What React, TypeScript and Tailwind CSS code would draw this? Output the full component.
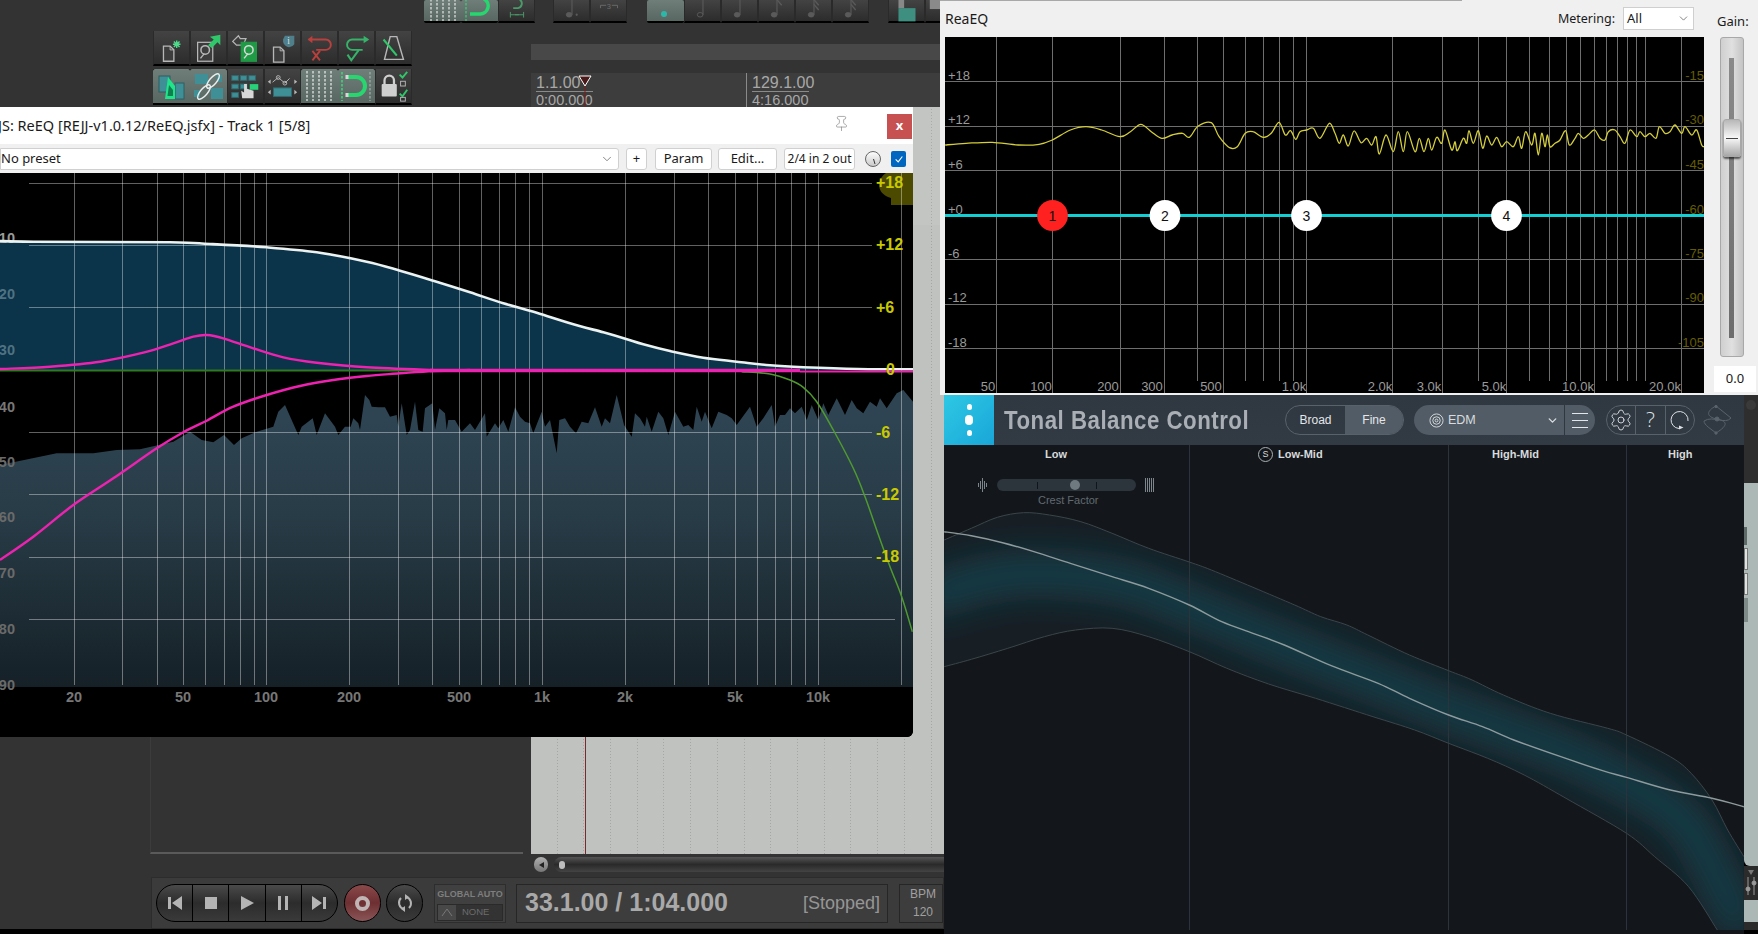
import React from "react";
import { ChevronDown, Pin, Settings } from "lucide-react";

type Pt = [number, number];
const pts = (a: Pt[], fx: (n: number) => number, fy: (n: number) => number): Pt[] =>
  a.map(([x, y]) => [fx(x), fy(y)] as Pt);
const poly = (a: Pt[]) => a.map(([x, y]) => `${x.toFixed(1)},${y.toFixed(1)}`).join(" ");
const smooth = (a: Pt[]) => {
  let d = `M${a[0][0].toFixed(1)} ${a[0][1].toFixed(1)}`;
  for (let i = 0; i < a.length - 1; i++) {
    const p0 = a[Math.max(0, i - 1)], p1 = a[i], p2 = a[i + 1], p3 = a[Math.min(a.length - 1, i + 2)];
    const c1 = [p1[0] + (p2[0] - p0[0]) / 6, p1[1] + (p2[1] - p0[1]) / 6];
    const c2 = [p2[0] - (p3[0] - p1[0]) / 6, p2[1] - (p3[1] - p1[1]) / 6];
    d += `C${c1[0].toFixed(1)} ${c1[1].toFixed(1)} ${c2[0].toFixed(1)} ${c2[1].toFixed(1)} ${p2[0].toFixed(1)} ${p2[1].toFixed(1)}`;
  }
  return d;
};

const xl = (n: number) => n / 3;
const xr = (n: number) => 470 + n / 3;
const yt = (n: number) => 170 + n / 3;
const yb = (n: number) => 400 + n / 3;

const white: Pt[] = [
  ...pts([[0, 213], [100, 215], [510, 217], [630, 222], [800, 232], [950, 247], [1100, 275], [1200, 302], [1300, 332]], xl, yt),
  ...pts([[0, 367], [100, 400], [200, 428], [300, 460], [400, 487], [466, 506], [520, 523], [600, 543], [700, 563], [800, 575], [900, 586], [1000, 592], [1165, 597], [1329, 598]], xr, yt),
];
const pinkBump: Pt[] = pts([[0, 597], [150, 590], [300, 575], [430, 548], [520, 520], [580, 500], [620, 495], [670, 505], [760, 535], [850, 562], [950, 578], [1100, 592], [1300, 600]], xl, yt);
const pinkLow: Pt[] = [
  ...pts([[0, 480], [100, 410], [220, 315], [340, 235], [470, 145], [550, 97]], xl, yb),
  ...pts([[620, 752], [700, 710], [800, 675], [900, 648], [1000, 630], [1100, 618], [1200, 610], [1300, 603], [1410, 600]], xl, yt),
];
const green: Pt[] = [
  ...pts([[815, 605], [900, 612], [960, 630], [1000, 652], [1040, 695]], xr, yt),
  ...pts([[1090, 90], [1150, 205], [1185, 290], [1220, 390], [1260, 500], [1295, 590], [1327, 695]], xr, yb),
];
const spectrum: Pt[] = [
  ...pts([[0, 885], [170, 850], [280, 850], [350, 840], [420, 838], [520, 815], [570, 785], [605, 810], [640, 817], [672, 795], [702, 825], [725, 805], [770, 785], [820, 770], [835, 725], [855, 705], [895, 795], [905, 770], [938, 745], [950, 795], [975, 730], [1005, 770], [1015, 795], [1035, 770], [1052, 770], [1060, 745], [1075, 760], [1080, 780], [1095, 675], [1108, 690], [1115, 710], [1135, 712], [1155, 712], [1170, 740], [1190, 735], [1195, 770], [1205, 700], [1220, 795], [1230, 780], [1245, 695], [1255, 780], [1268, 785], [1275, 715], [1297, 700], [1305, 780], [1318, 715], [1335, 730], [1340, 780], [1345, 750], [1365, 750], [1385, 785]], xl, yt),
  ...pts([[0, 760], [15, 780], [45, 730], [50, 800], [75, 760], [85, 775], [100, 750], [115, 785], [135, 712], [150, 740], [165, 755], [180, 760], [190, 790], [215, 725], [225, 770], [240, 750], [260, 850], [268, 750], [285, 745], [300, 770], [318, 790], [335, 755], [355, 760], [375, 712], [395, 770], [405, 745], [420, 760], [440, 675], [462, 765], [485, 800], [495, 730], [510, 745], [525, 770], [530, 740], [545, 785], [565, 725], [580, 745], [595, 795], [615, 725], [640, 770], [655, 765], [670, 780], [680, 710], [695, 755], [705, 725], [725, 775], [745, 725], [770, 735], [785, 745], [800, 765], [840, 710], [860, 770], [880, 745], [905, 705], [915, 770], [930, 735], [945, 735], [960, 715], [975, 730], [995, 710], [1010, 750], [1025, 705], [1045, 750], [1060, 700], [1075, 735], [1100, 685], [1125, 735], [1145, 690], [1160, 715], [1180, 730], [1200, 695], [1220, 710], [1230, 685], [1250, 715], [1280, 670], [1300, 660], [1329, 695]], xr, yt),
];

const jsV = [74, 122, 157, 183, 205, 224, 240, 254, 266, 349, 398, 432, 459, 481, 499, 515, 529, 542, 625, 674, 708, 735, 757, 775, 791, 805, 818, 901];
const jsH = [183, 245, 307, 432, 494, 557];
const leftLabels: [string, number, string][] = [
  ["10", 238, "#9a9a9a"], ["20", 294, "#4f7283"], ["30", 350, "#4f7283"], ["40", 407, "#777777"], ["50", 462, "#6a6a6a"],
  ["60", 517, "#6a6a6a"], ["70", 573, "#6a6a6a"], ["80", 629, "#6a6a6a"], ["90", 685, "#6a6a6a"],
];
const rightLabels: [string, number, number][] = [
  ["+18", 876, 182], ["+12", 876, 244], ["+6", 876, 307], ["0", 886, 369], ["-6", 876, 432], ["-12", 876, 494], ["-18", 876, 556],
];
const freqLabels: [string, number][] = [
  ["20", 74], ["50", 183], ["100", 266], ["200", 349], ["500", 459], ["1k", 542], ["2k", 625], ["5k", 735], ["10k", 818],
];

function JsGraph() {
  return (
    <svg viewBox="0 173 913 564" className="block w-[913px] h-[564px] bg-black">
      <defs>
        <linearGradient id="spec" gradientUnits="userSpaceOnUse" x1="0" y1="420" x2="0" y2="687">
          <stop offset="0" stopColor="#2e4452" />
          <stop offset="0.35" stopColor="#283c47" />
          <stop offset="1" stopColor="#152027" />
        </linearGradient>
      </defs>
      <polygon points={poly([...white, [913, 370], [0, 370]])} fill="#0b3349" />
      <polygon points={poly([...spectrum, [913, 687], [0, 687]])} fill="url(#spec)" />
      <path d="M886 173 C876 180 877 192 888 197 L891 198 L891 205 L913 205 L913 173 Z" fill="#4c4a00" />
      <g stroke="#ffffff" strokeOpacity="0.38" strokeWidth="1" shapeRendering="crispEdges">
        {jsV.map((x) => <line key={x} x1={x + 0.5} x2={x + 0.5} y1="173" y2="685" />)}
        {jsH.map((y) => <line key={y} x1="29" x2="872" y1={y + 0.5} y2={y + 0.5} />)}
        <line x1="29" x2="895" y1="619.5" y2="619.5" />
      </g>
      {leftLabels.map(([t, y, c]) => (
        <text key={t} x="15" y={y + 5} fill={c} fontSize="14.5" fontWeight="700" textAnchor="end" fontFamily="'Liberation Sans',sans-serif">{t}</text>
      ))}
      {freqLabels.map(([t, x]) => (
        <text key={t} x={x} y="702" fill="#777777" fontSize="14.5" fontWeight="700" textAnchor="middle" fontFamily="'Liberation Sans',sans-serif">{t}</text>
      ))}
      <line x1="0" x2="741" y1="370.5" y2="370.5" stroke="#2f7a20" strokeWidth="2" />
      <path d={smooth(green)} fill="none" stroke="#4f9a2f" strokeWidth="1.5" />
      <path d={smooth(white)} fill="none" stroke="#eaf2f2" strokeWidth="2.6" />
      <path d={smooth(pinkBump)} fill="none" stroke="#ee22b0" strokeWidth="2.4" />
      <path d={smooth(pinkLow)} fill="none" stroke="#ee22b0" strokeWidth="2.4" />
      <line x1="430" x2="800" y1="370.5" y2="370.5" stroke="#ee22b0" strokeWidth="3.4" />
      <line x1="800" x2="913" y1="371.5" y2="371.5" stroke="#ee22b0" strokeWidth="2" />
      {rightLabels.map(([t, x, y]) => (
        <text key={t} x={x} y={y + 6} fill="#c9c900" fontSize="16" fontWeight="700" fontFamily="'Liberation Sans',sans-serif">{t}</text>
      ))}
    </svg>
  );
}

function JsWindow() {
  return (
    <div className="absolute left-0 top-[107px] w-[913px] h-[630px] flex flex-col bg-black rounded-br-md overflow-hidden font-['Noto_Sans','Liberation_Sans',sans-serif] text-[#1a1a1a]">
      <div className="h-[37px] bg-white flex items-center">
        <span className="-ml-[2px] text-[14.5px] flex-1 whitespace-nowrap">JS: ReEQ [REJJ-v1.0.12/ReEQ.jsfx] - Track 1 [5/8]</span>
        <Pin size={17} strokeWidth={1} className="text-[#888] mr-[37px] mb-[4px]" />
        <div className="w-[25px] h-[25px] mr-px mt-[1px] bg-[#c75050] text-white text-[13px] font-bold flex items-center justify-center">x</div>
      </div>
      <div className="h-[29px] bg-[#f0f0f0] flex items-center text-[13px]">
        <div className="w-[619px] h-[22px] bg-white border border-[#d0d0d0] rounded-r-[3px] flex items-center justify-between pl-0 pr-1">
          <span>No preset</span>
          <ChevronDown size={14} strokeWidth={1.2} className="text-[#555]" />
        </div>
        <div className="ml-[7px] w-[21px] h-[22px] bg-white border border-[#d0d0d0] rounded-[3px] flex items-center justify-center">+</div>
        <div className="ml-[8px] w-[57px] h-[22px] bg-white border border-[#d0d0d0] rounded-[3px] flex items-center justify-center">Param</div>
        <div className="ml-[6px] w-[59px] h-[22px] bg-white border border-[#d0d0d0] rounded-[3px] flex items-center justify-center">Edit...</div>
        <div className="ml-[7px] w-[71px] h-[22px] bg-white border border-[#d0d0d0] rounded-[3px] flex items-center justify-center text-[12px] whitespace-nowrap">2/4 in 2 out</div>
        <svg viewBox="0 0 18 18" className="ml-[9px] w-[18px] h-[18px]">
          <defs>
            <linearGradient id="knob" x1="0" y1="0" x2="0" y2="1">
              <stop offset="0" stopColor="#ffffff" />
              <stop offset="1" stopColor="#c8c8c8" />
            </linearGradient>
          </defs>
          <circle cx="9" cy="9" r="7.5" fill="url(#knob)" stroke="#666" strokeWidth="1" />
          <line x1="9.5" y1="9" x2="11" y2="14" stroke="#333" strokeWidth="1" />
        </svg>
        <div className="ml-[9px] w-[15px] h-[16px] rounded-[2px] bg-[#0067c0] text-white flex items-center justify-center">
          <svg viewBox="0 0 12 12" className="w-[10px] h-[10px]"><path d="M2 6.5 L5 9.5 L10 3" fill="none" stroke="#fff" strokeWidth="1.3" /></svg>
        </div>
      </div>
      <JsGraph />
    </div>
  );
}

const eqV: [number, boolean][] = [[996, true], [1052, true], [1120, true], [1164, true], [1197, false], [1223, true], [1245, false], [1263, false], [1279, false], [1293, false], [1306, true], [1392, true], [1442, true], [1478, false], [1506, true], [1529, false], [1549, false], [1566, false], [1580, false], [1594, true], [1606, false], [1617, false], [1627, false], [1636, false], [1645, false], [1681, true]];
const eqH = [81, 126, 170, 215, 259, 304, 348];
const eqLeft: [string, number][] = [["+18", 75], ["+12", 119], ["+6", 164], ["+0", 209], ["-6", 253], ["-12", 297], ["-18", 342]];
const eqRight: [string, number][] = [["-15", 75], ["-30", 119], ["-45", 164], ["-60", 209], ["-75", 253], ["-90", 297], ["-105", 342]];
const eqBottom: [string, number][] = [["50", 988], ["100", 1041], ["200", 1108], ["300", 1152], ["500", 1211], ["1.0k", 1294], ["2.0k", 1380], ["3.0k", 1429], ["5.0k", 1494], ["10.0k", 1578], ["20.0k", 1665]];
const yellowA: Pt[] = pts([[10, 435], [50, 430], [100, 427], [150, 435], [190, 433], [215, 420], [250, 390], [280, 380], [310, 390], [345, 410], [365, 395], [385, 373], [405, 395], [425, 415], [445, 405], [465, 400], [478, 412], [495, 378], [520, 368], [535, 410], [555, 443], [570, 440], [585, 400], [600, 395], [620, 412], [635, 400], [650, 367], [662, 405], [672, 392], [682, 418]], (n) => 940 + n / 1.917, (n) => n / 3);
const yellowB: Pt[] = pts([[0, 305], [20, 300], [40, 295], [60, 325], [88, 280], [105, 310], [118, 340], [130, 315], [145, 348], [162, 303], [183, 338], [200, 325], [215, 345], [228, 320], [238, 372], [258, 315], [280, 365], [295, 305], [310, 365], [322, 305], [345, 365], [358, 325], [372, 365], [385, 325], [395, 360], [410, 322], [425, 340], [435, 300], [455, 360], [465, 335], [472, 362], [490, 325], [500, 340], [507, 302], [520, 340], [535, 302], [548, 355], [560, 318], [575, 345], [590, 322], [605, 350], [620, 335], [640, 350], [655, 320], [665, 355], [677, 305], [695, 345], [705, 310], [715, 375], [725, 310], [735, 350], [742, 315], [750, 350], [765, 340], [780, 330], [797, 302], [808, 345], [825, 325], [835, 310], [850, 325], [865, 315], [884, 300], [900, 325], [915, 330], [925, 305], [945, 300], [960, 320], [975, 340], [990, 300], [1010, 320], [1020, 305], [1035, 320], [1050, 310], [1068, 325], [1078, 290], [1095, 310], [1110, 305], [1125, 285], [1145, 310], [1155, 290], [1175, 315], [1190, 300], [1205, 345], [1212, 350]], (n) => 1300 + n / 3, (n) => 30 + n / 3);

function EqGraph() {
  const f = "'Liberation Sans',sans-serif";
  return (
    <svg viewBox="945 37 759 356" className="block w-[759px] h-[356px] bg-black">
      <g stroke="#6e6e6e" strokeWidth="1" shapeRendering="crispEdges">
        {eqV.map(([x, full]) => <line key={x} x1={x + 0.5} x2={x + 0.5} y1="37" y2={full ? 393 : 381} />)}
        {eqH.map((y) => <line key={y} x1="945" x2="1704" y1={y + 0.5} y2={y + 0.5} />)}
      </g>
      {eqLeft.map(([t, y]) => <text key={t} x="948" y={y + 5} fill="#9a9a9a" fontSize="13" fontFamily={f}>{t}</text>)}
      {eqRight.map(([t, y]) => <text key={t} x="1704" y={y + 5} fill="#655c00" fontSize="13" textAnchor="end" fontFamily={f}>{t}</text>)}
      {eqBottom.map(([t, x]) => <text key={t} x={x} y="391" fill="#9a9a9a" fontSize="13" textAnchor="middle" fontFamily={f}>{t}</text>)}
      <path d={smooth([...yellowA, ...yellowB])} fill="none" stroke="#d4ce3a" strokeWidth="1.3" />
      <line x1="945" x2="1704" y1="215.5" y2="215.5" stroke="#12cfd3" strokeWidth="3" />
      {[["1", 1052.5, "#ff2020"], ["2", 1165, "#ffffff"], ["3", 1306.5, "#ffffff"], ["4", 1506.5, "#ffffff"]].map(([t, x, c]) => (
        <g key={t as string}>
          <circle cx={x as number} cy="215.5" r="15.4" fill={c as string} />
          <text x={x as number} y="220.5" fontSize="14" textAnchor="middle" fill="#111" fontFamily={f}>{t}</text>
        </g>
      ))}
    </svg>
  );
}

function EqWindow() {
  return (
    <div className="absolute left-[940px] top-0 w-[818px] h-[395px] bg-[#f0f0f0] font-['Noto_Sans','Liberation_Sans',sans-serif] text-[13px] text-[#1a1a1a] flex flex-col">
      <div className="h-px w-[522px] bg-[#a8a8a8]" />
      <div className="h-[36px] flex items-start">
        <span className="ml-[5px] mt-[9px] flex-1 leading-[18px] text-[14px]">ReaEQ</span>
        <span className="mt-[9px] leading-[18px] text-[12.5px]">Metering:</span>
        <div className="ml-[8px] mt-[6px] w-[71px] h-[23px] bg-white border border-[#cfcfcf] flex items-center justify-between pl-[3px] pr-[3px]">
          <span>All</span>
          <ChevronDown size={13} strokeWidth={1.2} className="text-[#444]" />
        </div>
        <span className="ml-[23px] mr-[10px] w-[31px] mt-[11px] leading-[18px] whitespace-nowrap">Gain:</span>
      </div>
      <div className="flex flex-1 pl-[5px]">
        <EqGraph />
        <div className="ml-[8px] w-[46px] flex flex-col items-center">
          <div className="relative w-[24px] h-[320px] ml-[-7px] rounded-[3px] border border-[#a8a8a8] bg-gradient-to-r from-[#cfcfcf] via-[#e0e0e0] to-[#c4c4c4] flex justify-center">
            <div className="w-[5px] h-[280px] mt-[20px] bg-gradient-to-b from-[#8a8a8a] to-[#6c6c6c]" />
            <div className="absolute left-[2px] top-[81px] w-[18px] h-[38px] rounded-[3px] border border-[#a8a8a8] bg-gradient-to-b from-[#b8b8b8] via-[#f8f8f8] to-[#a8a8a8] shadow-[0_2px_2px_rgba(0,0,0,0.6)] flex items-center">
              <div className="w-full h-px bg-[#444] mx-[2px]" />
            </div>
          </div>
          <div className="mt-[9px] w-[42px] h-[26px] bg-white flex items-center justify-center">0.0</div>
        </div>
      </div>
    </div>
  );
}

const tx = (n: number) => 940 + n / 1.917;
const ty = (n: number) => 500 + n / 3;
const upper: Pt[] = pts([[8, 120], [60, 85], [110, 52], [160, 38], [210, 45], [270, 65], [330, 100], [400, 145], [478, 186], [520, 210], [600, 262], [680, 315], [730, 350], [780, 375], [820, 405], [900, 465], [975, 512], [1020, 540], [1080, 585], [1170, 640], [1280, 685], [1316, 705], [1400, 770], [1440, 820], [1480, 900], [1510, 990], [1541, 1070]], tx, ty);
const lower: Pt[] = pts([[8, 500], [60, 478], [130, 445], [200, 410], [260, 390], [330, 385], [400, 410], [478, 455], [550, 505], [630, 552], [720, 595], [830, 650], [910, 690], [975, 730], [1050, 775], [1120, 825], [1200, 895], [1316, 1000], [1370, 1070], [1435, 1160], [1490, 1290]], tx, ty);
const mid: Pt[] = pts([[8, 95], [60, 107], [120, 128], [180, 155], [250, 190], [330, 230], [400, 265], [478, 315], [540, 365], [600, 400], [660, 435], [750, 497], [840, 550], [900, 595], [975, 645], [1040, 680], [1100, 720], [1190, 770], [1270, 812], [1316, 832], [1400, 870], [1480, 895], [1541, 920]], tx, ty);
const core: Pt[] = pts([[-40, 300], [130, 225], [330, 240], [478, 320], [650, 430], [830, 540], [975, 630], [1200, 760], [1316, 850], [1420, 950], [1480, 1100], [1541, 1300]], tx, ty);

function TbcGraph() {
  const bandD = smooth(upper) + "L" + `${tx(1541)} ${ty(1290)}` + "L" + smooth([...lower].reverse()).slice(1) + "Z";
  return (
    <svg viewBox="944 445 800 485" className="absolute left-0 top-[50px] w-[800px] h-[485px]">
      <defs>
        <clipPath id="band"><path d={bandD} /></clipPath>
        <filter id="glow" x="-30%" y="-30%" width="160%" height="160%"><feGaussianBlur stdDeviation="18" /></filter>
      </defs>
      <path d={bandD} fill="#171f25" />
      <g clipPath="url(#band)">
        <path d={smooth(core)} fill="none" stroke="#124753" strokeWidth="30" filter="url(#glow)" />
      </g>
      <g stroke="#2b343a" strokeWidth="1" shapeRendering="crispEdges">
        {[1189, 1448, 1626].map((x) => <line key={x} x1={x + 0.5} x2={x + 0.5} y1="445" y2="930" />)}
      </g>
      <path d={smooth(upper)} fill="none" stroke="#3a454a" strokeWidth="1" />
      <path d={smooth(lower)} fill="none" stroke="#3a454a" strokeWidth="1" />
      <path d={smooth(mid)} fill="none" stroke="#8e9a9d" strokeWidth="1.4" />
    </svg>
  );
}

function TbcWindow() {
  return (
    <div className="absolute left-[944px] top-[395px] w-[800px] h-[539px] flex flex-col bg-[#13171b] font-['Liberation_Sans',sans-serif]">
      <TbcGraph />
      <div className="relative h-[50px] bg-gradient-to-b from-[#2f3741] to-[#323a44] flex items-center">
        <div className="w-[50px] h-[50px] bg-gradient-to-br from-[#2ec8e4] to-[#19a6d8] flex flex-col items-center justify-center gap-[5px]">
          <div className="w-[5px] h-[6px] rounded-full bg-white" />
          <div className="w-[8px] h-[10px] rounded-full bg-white" />
          <div className="w-[5px] h-[6px] rounded-full bg-white" />
        </div>
        <div className="ml-[10px] w-[281px] pt-[2px]">
          <span className="inline-block origin-left scale-x-[0.84] text-[26.5px] font-bold text-[#a9afb5] whitespace-nowrap tracking-[0.6px]">Tonal Balance Control</span>
        </div>
        <div className="w-[119px] h-[30px] rounded-full border border-[#58626b] flex overflow-hidden text-[12px] text-[#e4e6e8]">
          <div className="w-[59px] flex items-center justify-center">Broad</div>
          <div className="flex-1 bg-[#515c66] flex items-center justify-center">Fine</div>
        </div>
        <div className="ml-[10px] w-[181px] h-[30px] rounded-full bg-[#515c66] flex items-center text-[12.5px] text-[#d9dcdf]">
          <svg viewBox="0 0 16 16" className="ml-[15px] w-[15px] h-[15px]" fill="none" stroke="#d9dcdf" strokeWidth="1">
            <circle cx="8" cy="8" r="7" /><circle cx="8" cy="8" r="4" /><circle cx="8" cy="8" r="1.5" />
          </svg>
          <span className="ml-[4px] flex-1">EDM</span>
          <ChevronDown size={13} strokeWidth={2.6} className="mr-[5px] text-[#d9dcdf]" />
          <div className="w-px h-[30px] bg-[#2f3741]" />
          <div className="w-[30px] flex flex-col items-center gap-[6px]">
            <div className="w-[16px] h-px bg-[#e4e6e8]" /><div className="w-[16px] h-px bg-[#e4e6e8]" /><div className="w-[16px] h-px bg-[#e4e6e8]" />
          </div>
        </div>
        <div className="ml-[11px] w-[89px] h-[30px] rounded-full border border-[#58626b] flex text-[#dfe2e4]">
          <div className="w-[29px] flex items-center justify-center border-r border-[#58626b]"><Settings size={24} strokeWidth={0.9} /></div>
          <div className="w-[30px] flex items-center justify-center border-r border-[#58626b] text-[21px] font-light font-['Open_Sans','Liberation_Sans',sans-serif]">?</div>
          <div className="flex-1 flex items-center justify-center">
            <svg viewBox="0 0 20 20" className="w-[20px] h-[20px]" fill="none" stroke="#dfe2e4" strokeWidth="1">
              <path d="M9 18.5 A8.5 8.5 0 1 1 18 11" />
              <path d="M9 15.5 L13.5 17.5 L9 19.5 Z" fill="#dfe2e4" stroke="none" />
            </svg>
          </div>
        </div>
        <svg viewBox="0 0 30 30" className="ml-[8px] w-[30px] h-[30px]" fill="none" stroke="#59636c" strokeWidth="1">
          <path d="M13 1 L28 13 C22 20 10 10 1 16 C1 20 8 24 13 28 M13 1 C3 6 3 12 14 14 C24 16 26 20 13 28" />
          <circle cx="14" cy="14" r="2" fill="#59636c" />
          <circle cx="13" cy="1.5" r="1.2" fill="#59636c" />
          <circle cx="13" cy="28" r="1.2" fill="#59636c" />
        </svg>
      </div>
      <div className="relative h-[19px] text-[11px] font-bold text-[#d8dadc] flex items-center">
        <span className="w-[224px] text-center">Low</span>
        <span className="absolute left-[314px] flex items-center gap-[5px]">
          <span className="w-[15px] h-[15px] rounded-full border border-[#aab0b4] text-[9px] flex items-center justify-center font-normal">S</span>
          Low-Mid
        </span>
        <span className="absolute left-[548px]">High-Mid</span>
        <span className="absolute left-[724px]">High</span>
      </div>
      <div className="relative ml-[34px] mt-[14px] flex items-center">
        <svg viewBox="0 0 10 14" className="w-[10px] h-[14px]" stroke="#7d868c" strokeWidth="1" shapeRendering="crispEdges">
          <path d="M0.5 5v4M2.5 3v8M4.5 0v14M6.5 3v8M8.5 5v4" />
        </svg>
        <div className="relative ml-[9px] w-[139px] h-[12px] rounded-full bg-[#2c343c]">
          <div className="absolute left-[40px] top-[3px] w-px h-[7px] bg-[#11151a]" />
          <div className="absolute left-[99px] top-[3px] w-px h-[7px] bg-[#11151a]" />
          <div className="absolute left-[73px] top-[1px] w-[10px] h-[10px] rounded-full bg-[#6f7980]" />
        </div>
        <svg viewBox="0 0 10 14" className="ml-[9px] w-[10px] h-[14px]" stroke="#7d868c" strokeWidth="1" shapeRendering="crispEdges">
          <path d="M0.5 0v14M2.5 0v14M4.5 0v14M6.5 0v14M8.5 0v14" />
        </svg>
      </div>
      <span className="relative ml-[94px] text-[11px] text-[#626a70]">Crest Factor</span>
    </div>
  );
}

function RightStrip() {
  return (
    <div className="absolute left-[1744px] top-[395px] w-[14px] h-[539px] flex flex-col bg-black">
      <div className="h-[88px] bg-[#2e2e2e] flex justify-center">
        <div className="mt-[5px] w-[10px] h-[10px] rounded-full bg-[#3a3a3a]" />
      </div>
      <div className="h-[383px] bg-[#abb8b5] rounded-bl-[6px] flex flex-col gap-[3px] pt-[44px]">
        <div className="w-[3px] h-[18px] bg-[#5e6a68]" />
        <div className="w-[4px] h-[22px] bg-[#dde3e1] border border-[#777]" />
        <div className="w-[4px] h-[22px] bg-[#dde3e1] border border-[#777]" />
        <div className="w-[4px] h-[24px] bg-[#7d8a88]" />
      </div>
      <div className="h-[34px] bg-[#2b2b2b] flex flex-col items-center pt-[3px] text-[#9a9a9a]">
        <svg viewBox="0 0 14 30" className="w-[14px] h-[30px]" stroke="#9a9a9a" fill="none">
          <path d="M4 1 L7 6 L10 1 Z" fill="#777" stroke="none" />
          <path d="M4 8v18M10 8v18" /><circle cx="4" cy="20" r="2" fill="#9a9a9a" /><circle cx="10" cy="14" r="2" fill="#9a9a9a" />
        </svg>
      </div>
      <div className="h-[22px] bg-[#abb8b5]" />
      <div className="h-[8px] bg-[#2b2b2b]" />
    </div>
  );
}

/* ----- Reaper toolbar ----- */
function Tb({ active, children, w = "w-[37px]" }: { active?: boolean; children?: React.ReactNode; w?: string }) {
  return (
    <div className={`${w} h-full border-b-2 border-b-black flex items-center justify-center ${active ? "bg-gradient-to-b from-[#6f7e79] to-[#596763] rounded-[2px]" : "bg-gradient-to-b from-[#434343] to-[#2c2c2c] border-x border-x-[#2a2a2a]"}`}>
      {children}
    </div>
  );
}
const Ic = ({ children }: { children: React.ReactNode }) => (
  <svg viewBox="0 0 37 34" className="w-[37px] h-[34px]" fill="none">{children}</svg>
);
const Doc = ({ x = 0, y = 0 }: { x?: number; y?: number }) => (
  <g transform={`translate(${x} ${y})`}>
    <path d="M10 13 H17 L21 17 V29 H10 Z" fill="#3d3d3d" stroke="#b7b7b7" strokeWidth="1.4" />
    <path d="M17 13 V17 H21" stroke="#b7b7b7" strokeWidth="1" />
  </g>
);
const Hdd = ({ x, y, c }: { x: number; y: number; c: string }) => (
  <g transform={`translate(${x} ${y})`}>
    <rect x="0" y="0" width="16" height="20" fill={c === "#b7b7b7" ? "#3c3c3c" : "#1f9a45"} stroke={c} strokeWidth="1.3" />
    <circle cx="8" cy="8" r="4.5" stroke={c === "#b7b7b7" ? c : "#d8d8d8"} strokeWidth="1.6" />
    <path d="M3 17 L7 12" stroke={c === "#b7b7b7" ? c : "#d8d8d8"} strokeWidth="1.5" />
  </g>
);

const row1 = [
  <Ic key="a"><Doc x={0} y={2} /><path d="M24 9 L24 17 M20 13 L28 13 M21 10 L27 16 M27 10 L21 16" stroke="#4fd98a" strokeWidth="1.5" /></Ic>,
  <Ic key="b"><Hdd x={7} y={11} c="#b7b7b7" /><path d="M18 14 L24 8 L20 5 L31 3 L31 14 L28 11 L22 17 Z" fill="#2fc76a" /></Ic>,
  <Ic key="c"><path d="M5 10 L11 4 L13 7 L19 7 L16 14 L9 14 Z" fill="#3d3d3d" stroke="#b7b7b7" strokeWidth="1.3" /><Hdd x={14} y={11} c="#1f9a45" /></Ic>,
  <Ic key="d"><Doc x={-1} y={3} /><path d="M21 4 H31 V13 A7 7 0 0 1 24 16 A8 8 0 0 1 19 8 Z" fill="#4e7f8a" /><text x="25" y="13" fontSize="10" fontFamily="'Liberation Serif',serif" fill="#cfe1e4" textAnchor="middle">i</text></Ic>,
  <Ic key="e"><path d="M7 8 H25 A5 5 0 0 1 25 19 H15" stroke="#b8403d" strokeWidth="2" /><path d="M11 4 L6 8 L11 12 Z" fill="#b8403d" /><path d="M11 20 L19 30 M19 20 L11 30" stroke="#b8403d" strokeWidth="2" /></Ic>,
  <Ic key="f"><path d="M30 8 H14 A5 5 0 0 0 14 19 H25" stroke="#36b26a" strokeWidth="2" /><path d="M26 4 L32 8 L26 12 Z" fill="#36b26a" /><path d="M9 24 L13 30 L21 19" stroke="#36b26a" strokeWidth="2.2" /></Ic>,
  <Ic key="g"><path d="M15 5 H22 L29 29 H9 Z" stroke="#b7b7b7" strokeWidth="1.5" /><path d="M8 8 L22 25" stroke="#2fc76a" strokeWidth="2.2" /></Ic>,
];
const row2 = [
  <Ic key="a"><rect x="6" y="7" width="11" height="16" fill="#3f8f96" stroke="#2c5f62" /><rect x="22" y="14" width="9" height="16" fill="#3f8f96" stroke="#2c5f62" /><path d="M15 8 L22 17 V30 H12 Z" fill="#1fe58a" /><path d="M16 16 L20 21 V27 H14.5 Z" fill="#0f7f50" /></Ic>,
  <Ic key="b"><rect x="5" y="5" width="13" height="10" fill="#3f8f96" /><rect x="21" y="19" width="12" height="11" fill="#3f8f96" /><rect x="4" y="21" width="6" height="7" fill="#3f8f96" /><rect x="27" y="6" width="5" height="7" fill="#3f8f96" /><g stroke="#e9efee" strokeWidth="1.4" fill="none"><ellipse cx="23" cy="12" rx="9" ry="3.5" transform="rotate(-50 23 12)" /><ellipse cx="14" cy="23" rx="9" ry="3.5" transform="rotate(-50 14 23)" /></g></Ic>,
  <Ic key="c">
    {[[4, 6], [13, 6], [22, 6], [4, 15], [13, 15], [4, 24]].map(([x, y], i) => <rect key={i} x={x} y={y} width="7" height="5" fill="#3f8f96" stroke="#2f6a70" />)}
    <rect x="23" y="15" width="9" height="6" fill="#28d07a" />
    <path d="M17 15 V24 L14 22 L15 30 H27 V22 L20 20 V15 Z" fill="#d8d8d8" />
  </Ic>,
  <Ic key="d"><path d="M8 13 L14 8 L21 14 L26 9" stroke="#b7b7b7" strokeWidth="1" /><circle cx="14" cy="8" r="2" stroke="#b7b7b7" /><circle cx="21" cy="14" r="2" stroke="#b7b7b7" /><path d="M6 10 V15 L3 12.5 Z M31 10 V15 L34 12.5 Z M6 21 V26 L3 23.5 Z M31 21 V26 L34 23.5 Z" fill="#b7b7b7" /><rect x="9" y="19" width="19" height="9" fill="#3f8f96" stroke="#2f6a70" /></Ic>,
  <Ic key="e">{[6, 12, 18, 24, 30].map((x) => <line key={x} x1={x} x2={x} y1="2" y2="32" stroke="#dfe6e3" strokeWidth="1.3" strokeDasharray="2.5 1.5" />)}</Ic>,
  <Ic key="f"><line x1="4" x2="4" y1="3" y2="32" stroke="#38e07a" strokeWidth="1.4" strokeDasharray="2.5 1.5" /><line x1="32" x2="32" y1="3" y2="32" stroke="#9fb0aa" strokeWidth="1.2" strokeDasharray="2.5 1.5" /><path d="M9 8 H18 A9 9 0 0 1 18 26 H9" stroke="#27d66f" strokeWidth="4" /><path d="M9 6 V10 M9 24 V28" stroke="#d8d8d8" strokeWidth="3" /></Ic>,
  <Ic key="g"><rect x="6" y="15" width="16" height="13" fill="#cfcfcf" rx="1" /><path d="M9 15 V11 A5 5 0 0 1 19 11 V15" stroke="#cfcfcf" strokeWidth="2.4" /><path d="M25 5 L28 8 L33 2 M25 25 L28 28 L33 21" stroke="#2fc76a" strokeWidth="2" /><rect x="26" y="12" width="5" height="5" stroke="#b7b7b7" /><rect x="26" y="29" width="5" height="4" stroke="#b7b7b7" /></Ic>,
];

function Note({ flags = 0, hollow = false, dot = false }: { flags?: number; hollow?: boolean; dot?: boolean }) {
  return (
    <svg viewBox="0 0 37 23" className="w-[37px] h-[23px]" fill="none">
      <ellipse cx="16" cy="16" rx="3" ry="2.4" fill={hollow ? "none" : "#5a5a5a"} stroke="#5a5a5a" />
      <line x1="19" x2="19" y1="0" y2="16" stroke="#5a5a5a" strokeWidth="1.2" />
      {Array.from({ length: flags }).map((_, i) => <path key={i} d={`M19 ${i * 5} L24 ${i * 5 + 6}`} stroke="#5a5a5a" strokeWidth="1.4" />)}
      {dot && <circle cx="24" cy="16" r="1.2" fill="#5a5a5a" />}
    </svg>
  );
}

function TransportIcon({ children }: { children: React.ReactNode }) {
  return (
    <div className="flex-1 h-full flex items-center justify-center border-r border-r-black last:border-r-0">
      <svg viewBox="0 0 20 20" className="w-[20px] h-[20px]">{children}</svg>
    </div>
  );
}

function Reaper() {
  return (
    <div className="w-[944px] h-[934px] flex flex-col font-['Liberation_Sans',sans-serif] bg-[#333333] text-[#a8a8a8]">
      <div className="h-[23px] flex pl-[424px] overflow-hidden">
        <div className="flex h-full">
          <Tb active>
            <svg viewBox="0 0 37 23" className="w-[37px] h-[23px]">{[7, 13, 19, 25, 31].map((x) => <line key={x} x1={x} x2={x} y1="0" y2="22" stroke="#dfe6e3" strokeWidth="1.2" strokeDasharray="2.5 1.5" />)}</svg>
          </Tb>
          <Tb active>
            <svg viewBox="0 0 37 23" className="w-[37px] h-[23px]" fill="none"><path d="M9 15 H19 A8 8 0 0 0 23 0" stroke="#27d66f" strokeWidth="3.5" /><line x1="5" x2="5" y1="0" y2="22" stroke="#38e07a" strokeDasharray="2.5 1.5" /></svg>
          </Tb>
          <Tb>
            <svg viewBox="0 0 37 23" className="w-[37px] h-[23px]" fill="none"><path d="M15 9 H20 A5 5 0 0 0 22 0" stroke="#4a9a6a" strokeWidth="2" /><path d="M12 16 H26 M12 13 V19 M26 13 V19 M17 16 h4" stroke="#4a9a6a" strokeWidth="1" /></svg>
          </Tb>
        </div>
        <div className="ml-[18px] flex h-full">
          <Tb><Note dot /></Tb>
          <Tb>
            <svg viewBox="0 0 37 23" className="w-[37px] h-[23px]" fill="none"><path d="M10 9 V6 H16 M22 6 H28 V9" stroke="#6b6b6b" /><text x="19" y="10" fontSize="8" fill="#6b6b6b" textAnchor="middle">3</text></svg>
          </Tb>
        </div>
        <div className="ml-[20px] flex h-full">
          <Tb active><svg viewBox="0 0 37 23" className="w-[37px] h-[23px]"><circle cx="17" cy="15" r="3" fill="#2cb8a8" /></svg></Tb>
          <Tb><Note hollow /></Tb>
          <Tb><Note /></Tb>
          <Tb><Note flags={1} /></Tb>
          <Tb><Note flags={2} /></Tb>
          <Tb><Note flags={2} /></Tb>
        </div>
        <div className="ml-[19px] flex h-full">
          <Tb>
            <svg viewBox="0 0 37 23" className="w-[37px] h-[23px]"><rect x="10" y="9" width="18" height="14" fill="#3f8f80" /><rect x="10" y="0" width="6" height="9" fill="#888" /></svg>
          </Tb>
          <Tb>
            <svg viewBox="0 0 37 23" className="w-[37px] h-[23px]" fill="none"><rect x="4" y="-4" width="18" height="14" fill="#8a8a8a" /></svg>
          </Tb>
        </div>
      </div>

      <div className="h-[84px] flex">
        <div className="w-[531px] pl-[153px] pt-[8px] flex flex-col gap-[3px]">
          <div className="flex h-[35px] w-[259px]">{row1.map((c, i) => <Tb key={i}>{c}</Tb>)}</div>
          <div className="flex h-[36px] w-[259px] bg-black">{row2.map((c, i) => <Tb key={i} active={[0, 1, 4, 5].includes(i)}>{c}</Tb>)}</div>
        </div>
        <div className="flex-1 flex flex-col">
          <div className="mt-[21px] h-[16px] bg-[#484848]" />
          <div className="relative mt-[13px] h-[34px] bg-[#3d3d3d] flex text-[#a8a8a8]">
            <div className="w-[215px] pl-[5px] pt-[1px]">
              <div className="text-[16px] leading-[17px]">1.1.00</div>
              <div className="w-[57px] h-px bg-[#8a8a8a]" />
              <div className="text-[14.5px] leading-[16px]">0:00.000</div>
            </div>
            <div className="border-l border-l-[#8a8a8a] pl-[5px] pt-[1px]">
              <div className="text-[16px] leading-[17px]">129.1.00</div>
              <div className="w-[57px] h-px bg-[#8a8a8a]" />
              <div className="text-[14.5px] leading-[16px]">4:16.000</div>
            </div>
            <svg viewBox="0 0 14 34" className="absolute left-[47px] top-0 w-[14px] h-[34px]">
              <path d="M1 3 H13 L7 13 Z" fill="#4a1a1a" stroke="#ffffff" strokeWidth="1" />
              <line x1="7" x2="7" y1="13" y2="34" stroke="#7a1f1f" />
            </svg>
          </div>
        </div>
      </div>

      <div className="h-[747px] flex">
        <div className="ml-[150px] w-[373px] border-l border-l-[#3c3c3c] border-b-2 border-b-[#5a5a5a]" />
        <div className="relative ml-[8px] flex-1 bg-[repeating-linear-gradient(180deg,#c0c2c0_0,#c0c2c0_2px,transparent_2px,transparent_3px),repeating-linear-gradient(90deg,transparent_0,transparent_25.7px,#a4a6a4_25.7px,#a4a6a4_26.7px)] bg-[#c0c2c0]">
          <div className="absolute inset-x-0 top-0 h-[118px] bg-white/5" />
          <div className="absolute left-[54px] top-0 w-px h-full bg-[#7a2a2a]" />
        </div>
      </div>

      <div className="h-[23px] flex">
        <div className="ml-[534px] mt-[3px] w-[14px] h-[15px] rounded-full bg-gradient-to-b from-[#b0b0b0] to-[#777] flex items-center justify-center">
          <div className="w-0 h-0 border-y-[3px] border-y-transparent border-r-[5px] border-r-[#222]" />
        </div>
        <div className="ml-[6px] mt-[3px] flex-1 h-[15px] rounded-l-full bg-gradient-to-b from-[#555] via-[#2a2a2a] to-[#444] flex items-center pl-[5px]">
          <div className="w-[6px] h-[8px] rounded-full bg-[#bdbdbd]" />
        </div>
      </div>

      <div className="h-[52px] ml-[151px] bg-[#3b3b3b] border border-[#2c2c2c] flex items-center pl-[4px] gap-[6px]">
        <div className="w-[182px] h-[38px] rounded-full bg-gradient-to-b from-[#4a4a4a] via-[#2c2c2c] to-[#3a3a3a] border border-black flex overflow-hidden">
          <TransportIcon><path d="M3 4 H6 V16 H3 Z M17 3 V17 L7 10 Z" fill="#b4b4b4" /></TransportIcon>
          <TransportIcon><rect x="4" y="4" width="12" height="12" fill="#b4b4b4" /></TransportIcon>
          <TransportIcon><path d="M4 3 L17 10 L4 17 Z" fill="#b4b4b4" /></TransportIcon>
          <TransportIcon><path d="M5 3 H8 V17 H5 Z M12 3 H15 V17 H12 Z" fill="#b4b4b4" /></TransportIcon>
          <TransportIcon><path d="M3 3 L13 10 L3 17 Z M14 4 H17 V16 H14 Z" fill="#b4b4b4" /></TransportIcon>
        </div>
        <div className="w-[37px] h-[38px] rounded-full bg-gradient-to-b from-[#8a4a4c] via-[#6e2f32] to-[#8a5658] border border-black flex items-center justify-center">
          <div className="w-[15px] h-[15px] rounded-full border-[4px] border-[#c0b4b4]" />
        </div>
        <div className="ml-[-1px] w-[37px] h-[38px] rounded-full bg-gradient-to-b from-[#4a4a4a] via-[#2c2c2c] to-[#3a3a3a] border border-black flex items-center justify-center">
          <svg viewBox="0 0 20 20" className="w-[20px] h-[20px]" fill="none" stroke="#b4b4b4" strokeWidth="2">
            <path d="M6 5 A6.5 6.5 0 0 0 9 16" /><path d="M14 15 A6.5 6.5 0 0 0 11 4" />
            <path d="M10 1 V7 L14 4 Z M10 13 V19 L6 16 Z" fill="#b4b4b4" stroke="none" />
          </svg>
        </div>
        <div className="ml-[5px] w-[72px] h-[39px] bg-[#404040] border border-[#2d2d2d] flex flex-col items-center pt-[2px]">
          <span className="text-[9px] font-bold text-[#7e7e7e] leading-[14px] whitespace-nowrap">GLOBAL AUTO</span>
          <div className="mt-[3px] w-[66px] h-[17px] bg-[#333] border border-[#2a2a2a] flex items-center text-[9.5px] text-[#6c6c6c]">
            <div className="w-[18px] h-full bg-[#484848] flex items-center justify-center">
              <svg viewBox="0 0 12 10" className="w-[12px] h-[10px]" fill="none" stroke="#777"><path d="M1 9 L6 2 L11 9" /></svg>
            </div>
            <span className="ml-[6px]">NONE</span>
          </div>
        </div>
        <div className="ml-[4px] w-[372px] h-[39px] bg-[#3d3d3d] border border-[#262626] flex items-center justify-between pl-[8px] pr-[7px]">
          <span className="text-[25px] font-bold text-[#a9a9a9] whitespace-nowrap">33.1.00 / 1:04.000</span>
          <span className="text-[18px] text-[#969696]">[Stopped]</span>
        </div>
        <div className="ml-[5px] flex-1 h-[39px] bg-[#3d3d3d] border border-[#262626] flex flex-col items-center justify-center text-[12px] text-[#a0a0a0] leading-[18px] pl-[4px]">
          <span>BPM</span>
          <span>120</span>
        </div>
      </div>
      <div className="flex-1 bg-black" />
    </div>
  );
}

export default function App() {
  return (
    <div className="relative w-[1758px] h-[934px] overflow-hidden bg-black">
      <Reaper />
      <JsWindow />
      <EqWindow />
      <TbcWindow />
      <RightStrip />
    </div>
  );
}
